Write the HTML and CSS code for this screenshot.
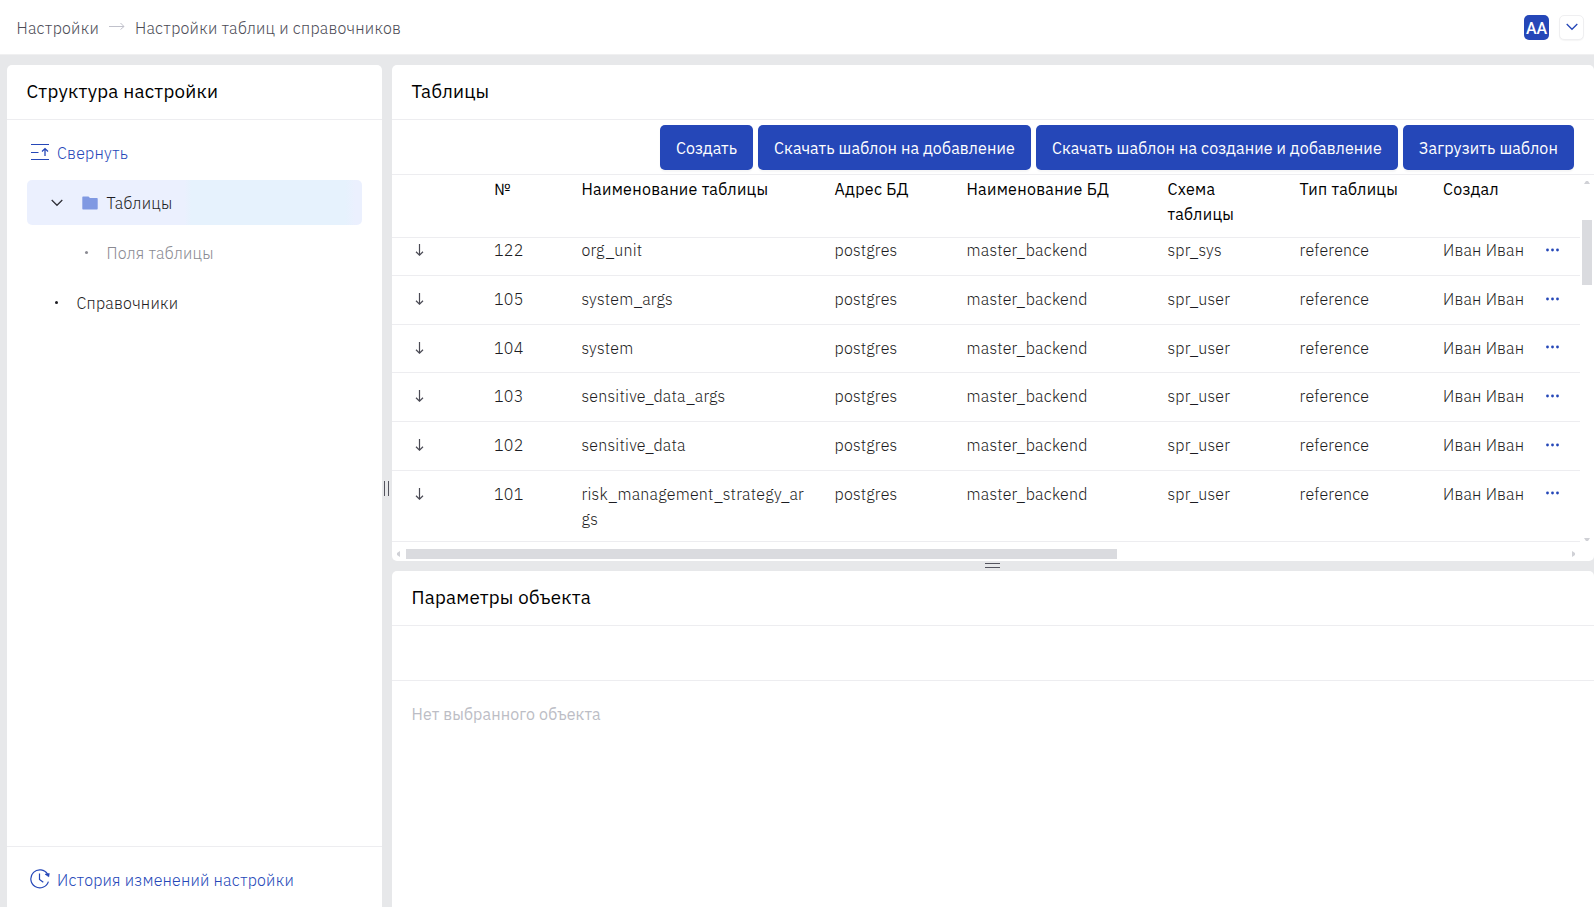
FILE: index.html
```html
<!DOCTYPE html>
<html lang="ru">
<head>
<meta charset="utf-8">
<title>Настройки таблиц и справочников</title>
<link rel="stylesheet" href="styles.css">
</head>
<body>
<header class="topbar">
  <nav class="crumbs">
    <span>Настройки</span>
    <svg class="crumb-arrow" width="16" height="8" viewBox="0 0 16 8" fill="none" stroke="#c0c1cb" stroke-width="1"><path d="M0 4.5H15M11.5 1L15 4.5L11.5 7.5"/></svg>
    <span>Настройки таблиц и справочников</span>
  </nav>
  <div class="user">
    <span class="avatar">АА</span>
    <button class="user-toggle"><svg width="12" height="8" viewBox="0 0 12 8" fill="none" stroke="#2547b8" stroke-width="1.3"><path d="M.7 1L6 6.3L11.3 1"/></svg></button>
  </div>
</header>
<main class="layout">
  <aside class="card sidebar">
    <h3 class="title">Структура настройки</h3>
    <div class="tree">
      <a class="link collapse"><svg width="18" height="16" viewBox="0 0 18 16" fill="none" stroke="#2547b8"><path d="M0 .5H18M0 15.5H18M0 8.5H7.5"/><path d="M14 12V5M11 7.5L14 4.6L17 7.5" stroke-width="1.3"/></svg>Свернуть</a>
      <div class="node selected">
        <svg class="chevron" width="12" height="8" viewBox="0 0 12 8" fill="none" stroke="#33333b" stroke-width="1.3"><path d="M.7 1L6 6.3L11.3 1"/></svg>
        <svg class="folder" width="16" height="14" viewBox="0 0 16 14" fill="#8099e2"><path d="M1 .5H6.5L8 2H15Q15.7 2 15.7 2.7V12.5Q15.7 13.4 15 13.4H1Q.3 13.4 .3 12.5V1.2Q.3 .5 1 .5Z"/></svg>
        <span>Таблицы</span>
      </div>
      <div class="node child"><i class="dot"></i><span>Поля таблицы</span></div>
      <div class="node leaf"><i class="dot"></i><span>Справочники</span></div>
    </div>
    <div class="sidebar-foot">
      <a class="link"><svg width="20" height="20" viewBox="0 0 20 20" fill="none" stroke="#2547b8" stroke-width="1.2"><path d="M17.6 5.3A9 9 0 1 0 18.4 12.6"/><path d="M9.5 4.5V10.5L13.3 13.3"/><path d="M15 5.2L19.3 4.5L18.8 7.8Z" fill="#2547b8" stroke-width=".6"/></svg>История изменений настройки</a>
    </div>
  </aside>
  <div class="splitter-v"><i class="grip-v"></i></div>
  <div class="right">
    <section class="card tables">
      <h3 class="title">Таблицы</h3>
      <div class="toolbar">
        <button class="btn create">Создать</button>
        <button class="btn">Скачать шаблон на добавление</button>
        <button class="btn">Скачать шаблон на создание и добавление</button>
        <button class="btn">Загрузить шаблон</button>
      </div>
      <div class="grid-area">
        <div class="grid">
          <div class="row head"><span></span><span>№</span><span>Наименование таблицы</span><span>Адрес БД</span><span>Наименование БД</span><span>Схема таблицы</span><span>Тип таблицы</span><span>Создал</span><span></span></div>
          <div class="rows" id="rows"></div>
        </div>
        <div class="vscroll">
          <svg width="6" height="3" viewBox="0 0 6 3" fill="#d0d1d6"><path d="M0 3L2 0H4L6 3Z"/></svg>
          <i class="vthumb"></i>
          <svg width="6" height="3" viewBox="0 0 6 3" fill="#d0d1d6"><path d="M0 0L2 3H4L6 0Z"/></svg>
        </div>
      </div>
      <div class="hscroll">
        <svg width="3" height="6" viewBox="0 0 3 6" fill="#d0d1d6"><path d="M3 0L0 2V4L3 6Z"/></svg>
        <i class="hthumb"></i>
        <svg width="3" height="6" viewBox="0 0 3 6" fill="#d0d1d6"><path d="M0 0L3 2V4L0 6Z"/></svg>
      </div>
    </section>
    <div class="splitter-h"><i class="grip-h"></i></div>
    <section class="card params">
      <h3 class="title">Параметры объекта</h3>
      <div class="params-bar"></div>
      <p class="empty">Нет выбранного объекта</p>
    </section>
  </div>
</main>
<script src="app.js"></script>
</body>
</html>
```
FILE: styles.css
```css
* { box-sizing: border-box; }
body {
  margin: 0;
  height: 907px;
  overflow: hidden;
  display: flex;
  flex-direction: column;
  background: #e7e8ea;
  color: #1c1c22;
  font: 300 16px/25px "IBM Plex Sans", Roboto, "Noto Sans", sans-serif;
  letter-spacing: .22px;
}
button { font: inherit; letter-spacing: inherit; border: 0; padding: 0; }
svg { display: block; flex: none; }

.topbar {
  flex: none;
  height: 55px;
  padding: 0 10px 0 16.5px;
  display: flex;
  align-items: center;
  justify-content: space-between;
  background: #fff;
  border-bottom: 1px solid #f0f0f1;
}
.crumbs { display: flex; align-items: center; color: #4c4c56; padding-top: 3px; letter-spacing: .22px; }
.crumb-arrow { margin: -6px 10px 0 10px; }
.user { display: flex; gap: 10px; }
.avatar {
  width: 25px; height: 25px;
  border-radius: 5px;
  background: #2547b8;
  color: #fff;
  font: 500 16px/27px Roboto, Arial, sans-serif;
  letter-spacing: 0;
  text-align: center;
}
.user-toggle {
  width: 25px; height: 25px;
  display: grid;
  place-items: center;
  background: #fff;
  border: 1px solid #efeff1;
  border-radius: 5px;
  box-shadow: 0 1px 1px #0000000a;
}

.layout { flex: 1; min-height: 0; display: flex; padding: 10px 0 0 7px; }
.card { background: #fff; border-radius: 5px; overflow: hidden; display: flex; flex-direction: column; }
.title {
  flex: none;
  height: 55px;
  margin: 0;
  padding: 0 19.5px;
  border-bottom: 1px solid #ededf0;
  color: #000;
  font-size: 18.72px;
  font-weight: 450;
  line-height: 52px;
  letter-spacing: .23px;
}
.link { display: flex; align-items: center; gap: 8px; color: #2547b8; }

.sidebar { width: 375px; flex: none; border-radius: 5px 5px 0 0; }
.tree { flex: 1; padding: 21px 20px 0; }
.collapse { height: 25px; padding-left: 4px; margin-bottom: 14px; }
.collapse svg { margin: -3px 0 0; }
.node { height: 45px; margin-bottom: 5px; display: flex; align-items: center; border-radius: 5px; }
.node span { padding-top: 2px; }
.selected {
  padding-left: 23.5px;
  background: linear-gradient(90deg, #ebf0fe 47%, #e6f2fd 49%, #e6f2fd 95%, #ebf0fe 98%);
}
.folder { margin: 0 9px 0 19px; }
.dot { width: 3px; height: 3px; border-radius: 50%; background: currentColor; margin-top: -1px; }
.child { color: #8a8a92; padding-left: 58px; }
.child .dot { margin-right: 18.5px; }
.leaf { padding-left: 28px; }
.leaf .dot { margin-right: 18.5px; }
.sidebar-foot {
  height: 61px;
  border-top: 1px solid #ededf0;
  padding: 21px 22px 0 23px;
}
.sidebar-foot .link { gap: 7px; letter-spacing: .2px; }
.sidebar-foot svg { margin-top: -3px; }

.splitter-v { width: 10px; flex: none; display: flex; align-items: center; padding: 5px 0 0 2px; }
.grip-v { width: 5px; height: 15px; border: solid #55555f; border-width: 0 1px; }
.right { flex: 1; min-width: 0; display: flex; flex-direction: column; }
.splitter-h { height: 10px; flex: none; padding: 2px 0 0 593px; }
.grip-h { display: block; width: 15px; height: 5px; border: solid #55555f; border-width: 1px 0; }

.tables { height: 496px; flex: none; }
.toolbar {
  height: 55px;
  flex: none;
  display: flex;
  justify-content: flex-end;
  gap: 5px;
  padding: 5px 20px 0 0;
  border-bottom: 1px solid #ededf0;
}
.btn {
  height: 45px;
  padding: 2px 16px 0;
  border-radius: 5px;
  background: #2547b8;
  color: #fff;
  font-weight: 450;
  letter-spacing: .135px;
  white-space: nowrap;
  box-shadow: 0 2px 2px #0000000a;
}
.create { letter-spacing: .07px; }
.grid-area { display: flex; height: 367px; flex: none; }
.grid { width: 1188px; overflow: hidden; border-bottom: 1px solid #ededf0; }
.row {
  display: grid;
  grid-template-columns: 102px 87.5px 253px 132px 201px 132px 143.5px 82px 1fr;
  height: 48.7px;
  padding-top: 11px;
  border-bottom: 1px solid #ededf0;
}
.row svg { margin: 6px 0 0 23px; }
.row .more { margin: 9.5px 0 0 20px; }
.row span { white-space: nowrap; }
.row .name { width: 227px; white-space: normal; overflow-wrap: anywhere; }
.row.tall { height: 73.7px; }
.row.head {
  position: relative;
  z-index: 1;
  height: 63px;
  padding-top: 2px;
  background: #fff;
  color: #000;
  font-weight: 450;
  letter-spacing: .3px;
}
.row.head span { white-space: normal; padding-right: 20px; }
.row.head span:nth-child(n+7) { padding-right: 0; }
.rows { margin-top: -10.7px; }
.vscroll { flex: 1; display: flex; flex-direction: column; align-items: center; padding: 6px 0 0; }
.vthumb { width: 10px; height: 65px; margin: 36px 0 253px; background: #dadbdf; }
.hscroll { display: flex; align-items: center; height: 10px; margin: 7px 0 0; padding: 0 19px 0 5px; }
.hthumb { width: 711px; height: 10px; margin: 0 auto 0 6px; background: #dadbdf; }

.params { flex: 1; border-radius: 5px 5px 0 0; }
.params-bar { height: 55px; flex: none; border-bottom: 1px solid #ededf0; }
.empty { margin: 21px 19.5px; color: #bcbdc5; font-weight: 400; letter-spacing: .12px; }
```
FILE: app.js
```js
const tables = [
  [122, 'org_unit', 'spr_sys'],
  [105, 'system_args', 'spr_user'],
  [104, 'system', 'spr_user'],
  [103, 'sensitive_data_args', 'spr_user'],
  [102, 'sensitive_data', 'spr_user'],
  [101, 'risk_management_strategy_args', 'spr_user', 'tall'],
];
const arrow = '<svg width="9" height="12" viewBox="0 0 9 12" fill="none" stroke="#4a4a54" stroke-width="1.2"><path d="M4.5 0V11M1 7.8L4.5 11.2L8 7.8"/></svg>';
const dots = '<svg class="more" width="15" height="4" viewBox="0 0 15 4" fill="#2547b8"><circle cx="2.5" cy="2" r="1.4"/><circle cx="7.5" cy="2" r="1.4"/><circle cx="12.5" cy="2" r="1.4"/></svg>';
document.getElementById('rows').innerHTML = tables.map(([id, name, scheme, size = '']) =>
  `<div class="row ${size}">${arrow}<span>${id}</span><span class="name">${name}</span><span>postgres</span><span>master_backend</span><span>${scheme}</span><span>reference</span><span>Иван Иван</span>${dots}</div>`
).join('');
```
